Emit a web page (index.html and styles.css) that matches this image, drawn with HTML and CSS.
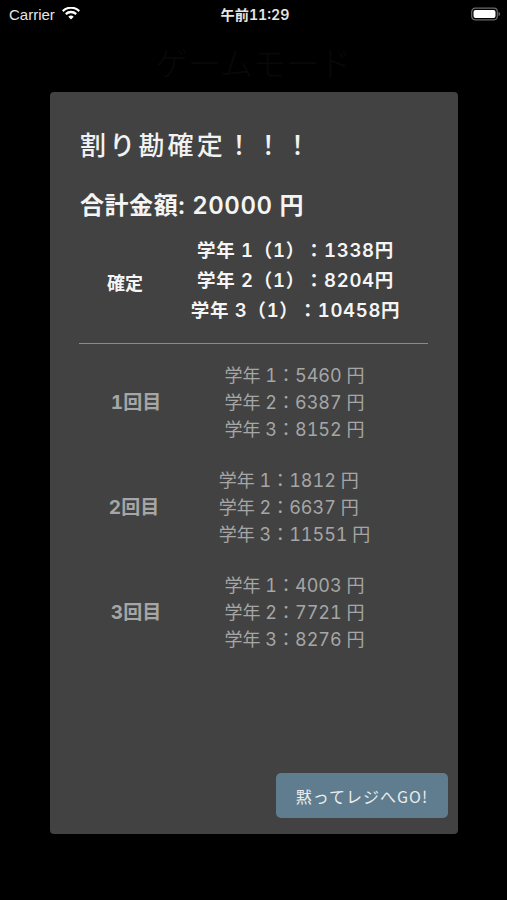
FILE: index.html
```html
<!DOCTYPE html>
<html lang="ja">
<head>
<meta charset="utf-8">
<title>割り勘確定</title>
<link rel="stylesheet" href="styles.css">
</head>
<body>
<div class="screen">
  <header class="status">
    <div class="status-left">
      <span>Carrier</span>
      <svg class="wifi" viewBox="0 0 18 13" width="18" height="13"><path d="M9 12.6 6.300 9.700a3.900 3.900 0 0 1 5.400 0zM4.600 8 3 6.300a8.500 8.500 0 0 1 12 0L13.400 8a6.200 6.200 0 0 0-8.800 0zM1.500 4.900 0 3.300a12.800 12.800 0 0 1 18 0l-1.500 1.600a10.600 10.600 0 0 0-15 0z" fill="#fff"/></svg>
    </div>
    <div class="status-time">午前11:29</div>
    <div class="status-right">
      <svg viewBox="0 0 30 14" width="30" height="14"><rect x="0.700" y="1.200" width="25.600" height="11.600" rx="3.500" fill="none" stroke="#6a6a6a" stroke-width="1.200"/><rect x="2.500" y="3" width="22" height="8" rx="2" fill="#fff"/><path d="M27.500 5v4c1-.3 1.500-1 1.500-2s-.5-1.700-1.500-2z" fill="#6a6a6a"/></svg>
    </div>
  </header>
  <div class="ghost-title">ゲームモード</div>
  <main class="panel">
    <h1 class="title">割り勘確定！！！</h1>
    <p class="total">合計金額: 20000 円</p>
    <section class="row final">
      <div class="label">確定</div>
      <div class="values">
        <div>学年 1（1）：1338円</div>
        <div>学年 2（1）：8204円</div>
        <div>学年 3（1）：10458円</div>
      </div>
    </section>
    <hr class="rule">
    <section class="row round">
      <div class="label">1回目</div>
      <div class="values">
        <div>学年 1：5460 円</div>
        <div>学年 2：6387 円</div>
        <div>学年 3：8152 円</div>
      </div>
    </section>
    <section class="row round wide">
      <div class="label">2回目</div>
      <div class="values">
        <div>学年 1：1812 円</div>
        <div>学年 2：6637 円</div>
        <div>学年 3：11551 円</div>
      </div>
    </section>
    <section class="row round">
      <div class="label">3回目</div>
      <div class="values">
        <div>学年 1：4003 円</div>
        <div>学年 2：7721 円</div>
        <div>学年 3：8276 円</div>
      </div>
    </section>
    <button class="go" type="button">黙ってレジへGO!</button>
  </main>
</div>
</body>
</html>
```
FILE: styles.css
```css
* { box-sizing: border-box; }
html, body { margin: 0; height: 100%; background: #000; }
body { font-family: "Inter", "Noto Sans CJK JP", sans-serif; font-variant-numeric: tabular-nums; text-spacing-trim: space-all; }
.screen { width: 507px; height: 900px; display: flex; flex-direction: column; overflow: hidden; }
.status {
  height: 28px; padding: 0 6px 0 9px;
  display: grid; grid-template-columns: 1fr auto 1fr; align-items: center;
  color: #e6e6e6;
}
.status-left { display: flex; align-items: center; gap: 7px; font-family: "Liberation Sans", sans-serif; font-size: 15px; }
.wifi { margin-top: -2px; }
.status-time { font-weight: 600; font-size: 14.200px; }
.status-right { display: flex; justify-content: flex-end; }
.ghost-title { height: 64px; text-align: center; color: #080808; font-size: 33px; line-height: 68px; font-family: "Noto Sans CJK JP", sans-serif; font-weight: 300; }
.panel {
  width: 408px; height: 742px; margin-left: 50px;
  background: #424242; border-radius: 4px;
  padding: 35px 10px 16px 30px;
  display: flex; flex-direction: column;
}
.title { margin: 0; font-family: "Noto Sans CJK JP", sans-serif; font-size: 26px; line-height: 34px; font-weight: 500; color: #f2f2f2; letter-spacing: 3.200px; }
.total { margin: 28px 0 0; font-size: 24px; line-height: 34px; font-weight: 600; color: #f4f4f4; letter-spacing: 0.550px; }
.row { display: grid; grid-template-columns: 90px 1fr; align-items: center; justify-items: center; width: 349px; }
.label { font-weight: 700; white-space: nowrap; }
.values { white-space: nowrap; }
.final { margin-top: 12px; color: #f5f5f5; }
.final .label { font-size: 18px; padding-top: 3px; font-family: "Noto Sans CJK JP", sans-serif; }
.final .values { font-size: 18.500px; line-height: 30px; font-weight: 600; letter-spacing: 0.700px; text-align: center; padding-right: 8px; }
.rule { width: 349px; margin: 18px 0 0 -1px; border: 0; border-top: 1px solid #8a8a8a; flex: none; }
.round { color: #a6a6a6; margin-top: 20px; height: 85px; grid-template-columns: 110px 1fr; }
.rule + .round { margin-top: 14px; }
.round .label { font-size: 19px; padding-left: 2px; }
.wide .label { padding-left: 0; padding-right: 2px; }
.round .values { font-size: 18px; line-height: 27px; padding: 4px 30px 0 0; }
.go {
  margin-top: auto; align-self: flex-end;
  width: 172px; height: 45px; border: 0; border-radius: 5px;
  background: #5f7d8e; color: #ececec;
  font: 400 16px "Noto Sans CJK JP", sans-serif; letter-spacing: 1px;
}
```
